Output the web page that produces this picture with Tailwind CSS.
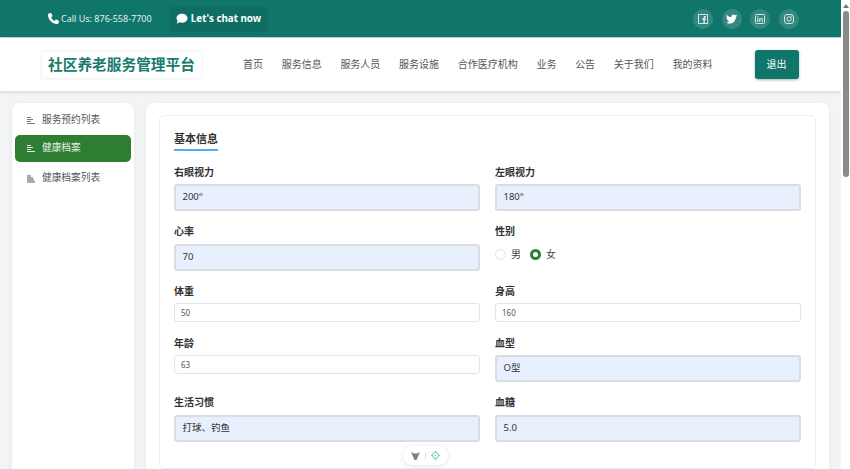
<!DOCTYPE html>
<html lang="zh">
<head>
<meta charset="utf-8">
<script src="https://cdn.jsdelivr.net/npm/@tailwindcss/browser@4"></script>
</head>
<body class="m-0 overflow-hidden h-[469px] w-[850px] bg-[#f3f4f6] font-['Noto_Sans','Noto_Sans_CJK_SC',sans-serif] text-[10px] text-[#444]">
<div class="flex h-[469px] w-[850px]">
  <div class="flex flex-col w-[841px] h-[469px] overflow-hidden">
    <!-- top bar -->
    <div class="h-[38px] shrink-0 bg-[#10756b] border-b border-[#b5e0d6] flex items-center justify-between pl-[48px] pr-[42px] text-white">
      <div class="flex items-center">
        <svg class="w-[11px] h-[11px] mr-[2px]" viewBox="0 0 512 512" fill="#fff"><path d="M164.900 24.600c-7.700-18.600-28-28.500-47.400-23.200l-88 24C12.100 30.200 0 46 0 64C0 311.400 200.600 512 448 512c18 0 33.800-12.100 38.600-29.500l24-88c5.300-19.400-4.600-39.700-23.200-47.400l-96-40c-16.300-6.800-35.200-2.100-46.300 11.600L304.700 368C234.300 334.700 177.300 277.700 144 207.300L193.300 167c13.700-11.200 18.400-30 11.600-46.300l-40-96z"/></svg>
        <span class="w-[91px] pt-[1px] text-[9px] whitespace-nowrap text-[#e3f1ee]">Call Us: 876-558-7700</span>
        <div class="ml-[18px] h-[23px] w-[97px] rounded-[4px] bg-[#0e6e64] shadow-sm flex items-center justify-center">
          <svg class="w-[12px] h-[11px] mr-[3px]" viewBox="0 0 512 512" fill="#fff"><path d="M256 32C114.600 32 0 125.100 0 240c0 49.600 21.400 95 57 130.700C44.500 421.100 2.700 466 2.200 466.500c-2.200 2.300-2.800 5.700-1.500 8.700S4.800 480 8 480c66.300 0 116-31.800 140.600-51.400 32.700 12.300 69 19.400 107.400 19.400 141.400 0 256-93.100 256-208S397.400 32 256 32z"/></svg>
          <span class="pt-[2px] text-[9.800px] font-bold text-white whitespace-nowrap">Let's chat now</span>
        </div>
      </div>
      <div class="flex items-center gap-[8.700px]">
        <div class="w-[20px] h-[20px] rounded-full bg-white/15 flex items-center justify-center">
          <svg class="w-[10px] h-[10px]" viewBox="0 0 10 10"><rect x="0.500" y="0.500" width="9" height="9" fill="none" stroke="#cfe3df" stroke-width="1"/><path d="M5.500 10V6H4.300V4.600h1.200V3.600c0-1.100.7-1.700 1.700-1.700h.9v1.300h-.7c-.4 0-.6.200-.6.600v.8h1.200L7.800 6H6.800v4z" fill="#e6f2f0"/></svg>
        </div>
        <div class="w-[20px] h-[20px] rounded-full bg-white/15 flex items-center justify-center">
          <svg class="w-[11px] h-[10px]" viewBox="0 0 24 20" fill="#fff"><path d="M24 2.400c-.9.400-1.800.7-2.800.8 1-.6 1.800-1.600 2.200-2.700-1 .6-2 1-3.100 1.200C19.300.7 18 0 16.600 0c-2.700 0-4.900 2.200-4.900 4.900 0 .4 0 .8.100 1.100C7.700 5.800 4.100 3.900 1.700.9 1.200 1.700 1 2.500 1 3.400c0 1.700.9 3.200 2.200 4.100-.8 0-1.600-.2-2.200-.6v.1c0 2.400 1.700 4.400 3.900 4.800-.4.100-.8.200-1.300.2-.3 0-.6 0-.9-.1.600 2 2.400 3.400 4.600 3.400-1.700 1.300-3.800 2.100-6.100 2.100-.4 0-.8 0-1.200-.1C2.200 19.200 4.800 20 7.500 20c9.100 0 14-7.500 14-14v-.6c1-.7 1.800-1.600 2.500-2.600z"/></svg>
        </div>
        <div class="w-[20px] h-[20px] rounded-full bg-white/15 flex items-center justify-center">
          <svg class="w-[10px] h-[10px]" viewBox="0 0 10 10"><rect x="0.500" y="0.500" width="9" height="9" rx="0.800" fill="none" stroke="#cfe3df" stroke-width="1"/><path d="M2.200 4.200h1.100v3.800H2.200zM2.200 2.300h1.100v1.100H2.200zM4.200 4.200h1v.5c.3-.4.700-.6 1.200-.6 1 0 1.400.6 1.400 1.600V8H6.800V6c0-.5-.2-.9-.6-.9-.5 0-.9.400-.9.900v2H4.200z" fill="#dcecea"/></svg>
        </div>
        <div class="w-[20px] h-[20px] rounded-full bg-white/15 flex items-center justify-center">
          <svg class="w-[10px] h-[10px]" viewBox="0 0 10 10" fill="none" stroke="#d8e9e6" stroke-width="1"><rect x="0.500" y="0.500" width="9" height="9" rx="2.500"/><circle cx="5" cy="5" r="2.200"/><circle cx="7.600" cy="2.400" r="0.300"/></svg>
        </div>
      </div>
    </div>
    <!-- header -->
    <div class="h-[53px] shrink-0 bg-white shadow-[0_1px_4px_rgba(0,0,0,0.13)] flex items-center pl-[42px] relative z-10">
      <div class="w-[159px] h-[26px] rounded-[3px] bg-white shadow-[0_0_4px_rgba(0,0,0,0.1)] flex items-center justify-center text-[14.700px] leading-none font-bold text-[#1a7a6c] whitespace-nowrap">社区养老服务管理平台</div>
      <nav class="ml-[42px] flex items-center gap-[18.700px] text-[10px] text-[#555] whitespace-nowrap">
        <span>首页</span><span>服务信息</span><span>服务人员</span><span>服务设施</span><span>合作医疗机构</span><span>业务</span><span>公告</span><span>关于我们</span><span>我的资料</span>
      </nav>
      <div class="ml-[42px] w-[44px] h-[29px] rounded-[3px] bg-[#10756b] shadow-[0_1px_3px_rgba(0,0,0,0.3)] flex items-center justify-center text-white text-[10px]">退出</div>
    </div>
    <!-- body -->
    <div class="flex gap-[12px] pl-[12px] pr-[12px] pt-[12px] flex-1 min-h-0">
      <!-- sidebar -->
      <aside class="w-[122px] shrink-0 h-[420px] bg-white rounded-[8px] shadow-[0_1px_6px_rgba(0,0,0,0.05)] px-[3px] pt-[4px] text-[9.700px]">
        <div class="h-[27px] flex items-center pl-[12px] text-[#555]">
          <svg class="w-[8px] h-[7px] mr-[7px]" viewBox="0 0 8 7" fill="#777"><rect width="4" height="1" y="0"/><rect width="6" height="1" y="2"/><rect width="4" height="1" y="4"/><rect width="8" height="1" y="6"/></svg>
          <span>服务预约列表</span>
        </div>
        <div class="mt-[1px] h-[27px] flex items-center pl-[12px] rounded-[5px] bg-[#2e7d32] text-[#e6f1e6]">
          <svg class="w-[8px] h-[7px] mr-[7px]" viewBox="0 0 8 7" fill="#dcebdc"><rect width="4" height="1" y="0"/><rect width="6" height="1" y="2"/><rect width="4" height="1" y="4"/><rect width="8" height="1" y="6"/></svg>
          <span>健康档案</span>
        </div>
        <div class="mt-[3px] h-[27px] flex items-center pl-[12px] text-[#555]">
          <svg class="w-[8px] h-[8px] mr-[7px]" viewBox="0 0 8 8" fill="#aaa"><rect width="4" height="2" y="0"/><rect width="6" height="2" y="2"/><rect width="7" height="2" y="4"/><rect width="8" height="2" y="6"/></svg>
          <span>健康档案列表</span>
        </div>
      </aside>
      <!-- main -->
      <main class="relative w-[683px] shrink-0 h-[420px] bg-white rounded-[8px] shadow-[0_1px_6px_rgba(0,0,0,0.05)] px-[13px] pt-[12px]">
        <div class="h-[354px] rounded-[5px] border border-[#eceef1] pl-[14px] pr-[14px] pt-[14px]">
          <div class="inline-block h-[21px] border-b-2 border-[#5aa9ee] text-[11px] leading-[18px] font-bold text-[#333] w-[44px] whitespace-nowrap">基本信息</div>
          <div class="grid grid-cols-2 gap-x-[15px] mt-[14px]">
            <div class="h-[59px]">
              <div class="h-[14px] leading-[14px] font-bold text-[#333]">右眼视力</div>
              <div class="mt-[5px] h-[27px] rounded-[3px] bg-[#e8f0fe] border-2 border-[#d9dce2] flex items-center pl-[6.500px] text-[9.500px] text-[#333]">200°</div>
            </div>
            <div class="h-[59px]">
              <div class="h-[14px] leading-[14px] font-bold text-[#333]">左眼视力</div>
              <div class="mt-[5px] h-[27px] rounded-[3px] bg-[#e8f0fe] border-2 border-[#d9dce2] flex items-center pl-[6.500px] text-[9.500px] text-[#333]">180°</div>
            </div>
            <div class="h-[60px]">
              <div class="h-[14px] leading-[14px] font-bold text-[#333]">心率</div>
              <div class="mt-[6px] h-[27px] rounded-[3px] bg-[#e8f0fe] border-2 border-[#d9dce2] flex items-center pl-[6.500px] text-[9.500px] text-[#333]">70</div>
            </div>
            <div class="h-[60px]">
              <div class="h-[14px] leading-[14px] font-bold text-[#333]">性别</div>
              <div class="mt-[9px] flex items-center text-[#444]">
                <span class="w-[11px] h-[11px] rounded-full border border-[#e0e0e0] bg-white"></span>
                <span class="ml-[5px]">男</span>
                <span class="ml-[9px] w-[11px] h-[11px] rounded-full border-[3.500px] border-[#2e7d32] bg-white"></span>
                <span class="ml-[5px]">女</span>
              </div>
            </div>
            <div class="h-[52px]">
              <div class="h-[14px] leading-[14px] font-bold text-[#333]">体重</div>
              <div class="mt-[5px] h-[19px] rounded-[3px] bg-white border border-[#e2e4e8] flex items-center pl-[6px] text-[8px] text-[#555]">50</div>
            </div>
            <div class="h-[52px]">
              <div class="h-[14px] leading-[14px] font-bold text-[#333]">身高</div>
              <div class="mt-[5px] h-[19px] rounded-[3px] bg-white border border-[#e2e4e8] flex items-center pl-[6px] text-[8px] text-[#555]">160</div>
            </div>
            <div class="h-[59px]">
              <div class="h-[14px] leading-[14px] font-bold text-[#333]">年龄</div>
              <div class="mt-[5px] h-[19px] rounded-[3px] bg-white border border-[#e2e4e8] flex items-center pl-[6px] text-[8px] text-[#555]">63</div>
            </div>
            <div class="h-[59px]">
              <div class="h-[14px] leading-[14px] font-bold text-[#333]">血型</div>
              <div class="mt-[5px] h-[27px] rounded-[3px] bg-[#e8f0fe] border-2 border-[#d9dce2] flex items-center pl-[6.500px] text-[9.500px] text-[#333]">O型</div>
            </div>
            <div>
              <div class="h-[14px] leading-[14px] font-bold text-[#333]">生活习惯</div>
              <div class="mt-[6px] h-[27px] rounded-[3px] bg-[#e8f0fe] border-2 border-[#d9dce2] flex items-center pl-[6.500px] text-[9.500px] text-[#333]">打球、钓鱼</div>
            </div>
            <div>
              <div class="h-[14px] leading-[14px] font-bold text-[#333]">血糖</div>
              <div class="mt-[6px] h-[27px] rounded-[3px] bg-[#e8f0fe] border-2 border-[#d9dce2] flex items-center pl-[6.500px] text-[9.500px] text-[#333]">5.0</div>
            </div>
          </div>
        </div>
        <!-- floating pill -->
        <div class="absolute left-[257px] top-[343px] w-[45px] h-[19px] rounded-full bg-white shadow-[0_1px_5px_rgba(0,0,0,0.12)] flex items-center justify-center">
          <svg class="w-[9px] h-[8px]" viewBox="0 0 9 8" fill="#808080"><path d="M0 0L3 1.500H6L9 0L5.500 8H3.500z"/></svg>
          <span class="mx-[5px] w-px h-[7px] bg-[#ddd]"></span>
          <svg class="w-[9px] h-[9px]" viewBox="0 0 9 9" fill="none" stroke="#4fdc9c" stroke-width="1"><circle cx="4.500" cy="4.500" r="3"/><circle cx="4.500" cy="4.500" r="0.800" fill="#4fdc9c" stroke="none"/><path d="M4.500 0v1.500M4.500 7.500V9M0 4.500h1.500M7.500 4.500H9"/></svg>
        </div>
      </main>
    </div>
  </div>
  <!-- scrollbar -->
  <div class="w-[9px] h-[469px] bg-white flex flex-col items-center">
    <div class="w-0 h-0 mt-[4px] border-x-[3px] border-x-transparent border-b-[4px] border-b-[#777]"></div>
    <div class="mt-[3px] w-[6px] h-[166px] rounded-full bg-[#8a8a8a]"></div>
  </div>
</div>
</body>
</html>
